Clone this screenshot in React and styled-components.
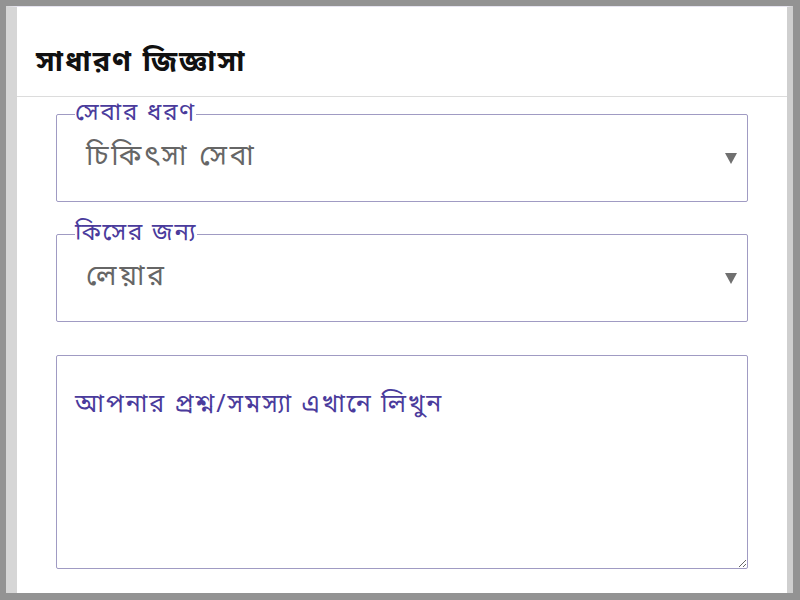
import React from "react";
import styled, { createGlobalStyle } from "styled-components";

const BN = `"Noto Sans Bengali", "Lohit Bengali", "Noto Sans", "DejaVu Sans", sans-serif`;

const GlobalStyle = createGlobalStyle`
  html, body {
    margin: 0;
    padding: 0;
    background: #939393;
  }
  * {
    box-sizing: border-box;
  }
`;

const App = () => {
  return (
    <>
      <GlobalStyle />
      <Frame>
        <Sheet>
          <Header>
            <Title>সাধারণ জিজ্ঞাসা</Title>
          </Header>
          <Form>
            <SelectBox>
              <Legend>সেবার ধরণ</Legend>
              <SelectRow>
                <Value>চিকিৎসা সেবা</Value>
                <Arrow />
              </SelectRow>
            </SelectBox>
            <SelectBox>
              <Legend>কিসের জন্য</Legend>
              <SelectRow>
                <Value>লেয়ার</Value>
                <Arrow />
              </SelectRow>
            </SelectBox>
            <Question placeholder="আপনার প্রশ্ন/সমস্যা এখানে লিখুন" />
          </Form>
        </Sheet>
      </Frame>
    </>
  );
};

const Frame = styled.div`
  width: 800px;
  height: 600px;
  padding: 6px 7px 7px 6px;
`;

const Sheet = styled.div`
  height: 100%;
  background: #ffffff;
  border-left: 11px solid #d6d6d6;
  border-right: 6px solid #cfcfcf;
  border-top: 1px solid #e6e4f0;
  display: flex;
  flex-direction: column;
`;

const Header = styled.div`
  height: 90px;
  border-bottom: 1px solid #dcdcdc;
  display: flex;
  align-items: center;
  padding: 24px 0 0 19px;
`;

const Title = styled.h1`
  margin: 0;
  font-family: ${BN};
  font-size: 29px;
  letter-spacing: 2px;
  font-weight: 700;
  color: #111111;
`;

const Form = styled.div`
  display: flex;
  flex-direction: column;
  gap: 20px;
  padding: 5px 39px 0 39px;
`;

const SelectBox = styled.fieldset`
  margin: 0;
  padding: 0 10px 0 0;
  border: 1.5px solid #a09bc3;
  border-radius: 2px;
  height: 100px;
`;

const Legend = styled.legend`
  margin-left: 18px;
  padding: 0;
  font-family: ${BN};
  font-size: 24px;
  line-height: 24px;
  letter-spacing: 1.8px;
  color: #4a3b9c;
`;

const SelectRow = styled.div`
  display: flex;
  align-items: center;
  height: 36px;
  margin-top: 14px;
  padding-left: 29px;
`;

const Value = styled.div`
  flex: 1;
  font-family: ${BN};
  font-size: 28px;
  line-height: 36px;
  letter-spacing: 2.8px;
  color: #666666;
`;

const Arrow = styled.span`
  width: 0;
  height: 0;
  border-left: 6px solid transparent;
  border-right: 6px solid transparent;
  border-top: 11px solid #707070;
`;

const Question = styled.textarea`
  display: block;
  width: 100%;
  height: 214px;
  margin: 13px 0 0;
  padding: 33px 18px 20px;
  border: 1.5px solid #a09bc3;
  border-radius: 2px;
  font-family: ${BN};
  font-size: 25px;
  line-height: 34px;
  letter-spacing: 1.9px;
  color: #333;
  outline: none;
  resize: vertical;
  &::placeholder {
    color: #4a3b9c;
    opacity: 1;
  }
`;

export default App;
